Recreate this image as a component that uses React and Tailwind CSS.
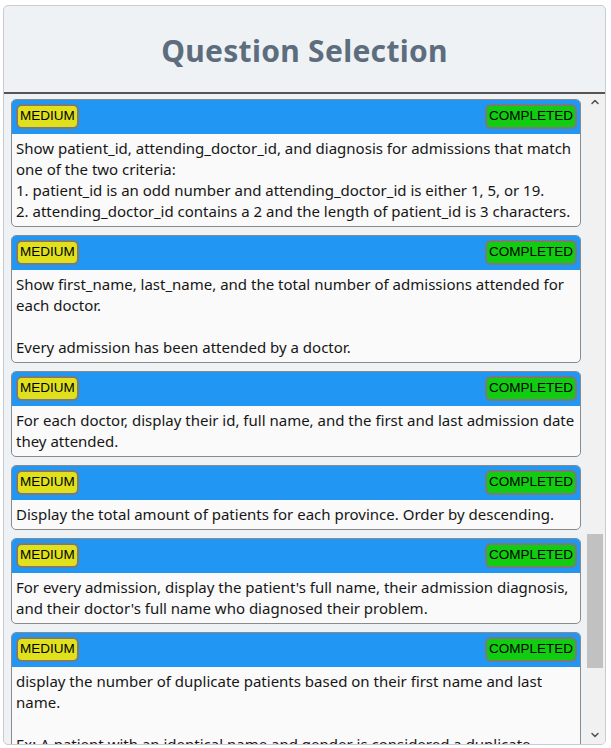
import { ChevronUp, ChevronDown } from 'lucide-react';

const questions = [
    {
        id: 1,
        difficulty: 'MEDIUM',
        status: 'COMPLETED',
        lines: [
            'Show patient_id, attending_doctor_id, and diagnosis for admissions that match one of the two criteria:',
            '1. patient_id is an odd number and attending_doctor_id is either 1, 5, or 19.',
            '2. attending_doctor_id contains a 2 and the length of patient_id is 3 characters.',
        ],
    },
    {
        id: 2,
        difficulty: 'MEDIUM',
        status: 'COMPLETED',
        lines: [
            'Show first_name, last_name, and the total number of admissions attended for each doctor.',
            '',
            'Every admission has been attended by a doctor.',
        ],
    },
    {
        id: 3,
        difficulty: 'MEDIUM',
        status: 'COMPLETED',
        lines: ['For each doctor, display their id, full name, and the first and last admission date they attended.'],
    },
    {
        id: 4,
        difficulty: 'MEDIUM',
        status: 'COMPLETED',
        lines: ['Display the total amount of patients for each province. Order by descending.'],
    },
    {
        id: 5,
        difficulty: 'MEDIUM',
        status: 'COMPLETED',
        lines: ["For every admission, display the patient's full name, their admission diagnosis, and their doctor's full name who diagnosed their problem."],
    },
    {
        id: 6,
        difficulty: 'MEDIUM',
        status: 'COMPLETED',
        lines: [
            'display the number of duplicate patients based on their first name and last name.',
            '',
            'Ex: A patient with an identical name and gender is considered a duplicate.',
        ],
    },
];

const Badge = ({ children, color }) => (
    <span
        className={`inline-flex items-center h-[25px] px-[2px] border-2 border-[#7a7a7a] rounded-[6px] text-black text-[13.5px] ${color}`}
        style={{ fontFamily: '"Liberation Sans", Arial, sans-serif' }}
    >
        {children}
    </span>
);

const QuestionCard = ({ question }) => (
    <div className="shrink-0 border border-[#8a8a8a] rounded-[5px] overflow-hidden bg-[#fafafa]">
        <div className="flex justify-between items-center bg-[#2196f3] pl-[4px] pr-[3px] pt-[4px] pb-[5px]">
            <Badge color="bg-[#e0e01c]">{question.difficulty}</Badge>
            <Badge color="bg-[#12cc12]">{question.status}</Badge>
        </div>
        <div className="px-[4px] py-[4px] text-[15px] leading-[21px] text-[#161616]">
            {question.lines.map((line, i) => (
                <div key={i} className="min-h-[21px]">{line}</div>
            ))}
        </div>
    </div>
);

const App = () => {
    return (
        <div className="w-full h-[748px] bg-white pt-[5px] pl-[3px] pr-[5px] pb-[3px]" style={{ fontFamily: '"Noto Sans", "Open Sans", sans-serif' }}>
            <div className="h-full flex flex-col border border-[#c8ccd0] rounded-[5px] bg-[#eef2f5] overflow-hidden">
                <div className="h-[88px] shrink-0 flex items-center justify-center border-b-2 border-[#555]">
                    <h1 className="text-[30px] font-bold text-[#5d6d7d] tracking-[0.3px] pt-[2px]">Question Selection</h1>
                </div>
                <div className="flex flex-1 min-h-0">
                    <div className="flex-1 flex flex-col gap-[8px] pt-[5px] pl-[7px] pr-[4px] overflow-hidden">
                        {questions.map((q) => (
                            <QuestionCard key={q.id} question={q} />
                        ))}
                    </div>
                    <div className="w-[20px] bg-[#f1f1f1] flex flex-col items-center">
                        <ChevronUp className="w-[12px] h-[12px] mt-[2px] text-[#505050]" strokeWidth={3} />
                        <div className="flex-1 w-full px-[2px] pt-[426px] pb-[61px]">
                            <div className="h-full w-full bg-[#c1c1c1]" />
                        </div>
                        <ChevronDown className="w-[12px] h-[12px] mb-[3px] text-[#505050]" strokeWidth={3} />
                    </div>
                </div>
            </div>
        </div>
    );
};

export default App;
